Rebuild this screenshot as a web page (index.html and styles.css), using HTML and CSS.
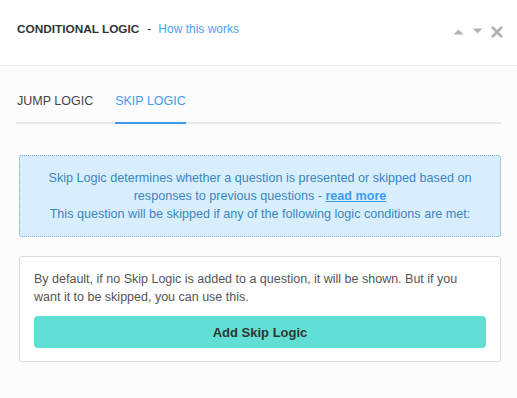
FILE: index.html
```html
<!DOCTYPE html>
<html>
<head>
<meta charset="utf-8">
<link rel="stylesheet" href="styles.css">
</head>
<body>
<div class="panel">
  <header class="header">
    <div class="title">
      <span class="title-main">CONDITIONAL LOGIC</span>
      <span class="dash">-</span>
      <a class="how" href="#">How this works</a>
    </div>
    <div class="controls">
      <svg width="11" height="7" viewBox="0 0 11 7"><path d="M0.5 6.5 L5.5 1.5 L10.5 6.5 Z" fill="#b3b3b3"/></svg>
      <svg width="11" height="7" viewBox="0 0 11 7"><path d="M0.5 0.5 L5.5 5.5 L10.5 0.5 Z" fill="#b3b3b3"/></svg>
      <svg width="12" height="12" viewBox="0 0 12 12"><path d="M1.8 1.8 L10.2 10.2 M10.2 1.8 L1.8 10.2" stroke="#b3b3b3" stroke-width="2.8" stroke-linecap="round"/></svg>
    </div>
  </header>
  <div class="content">
    <nav class="tabs">
      <a class="tab" href="#">JUMP LOGIC</a>
      <a class="tab active" href="#">SKIP LOGIC</a>
    </nav>
    <div class="info">
      Skip Logic determines whether a question is presented or skipped based on responses to previous questions - <a class="more" href="#">read more</a><br>
      This question will be skipped if any of the following logic conditions are met:
    </div>
    <div class="card">
      <p class="card-text">By default, if no Skip Logic is added to a question, it will be shown. But if you want it to be skipped, you can use this.</p>
      <button class="add-btn">Add Skip Logic</button>
    </div>
  </div>
</div>
</body>
</html>
```
FILE: styles.css
```css
* { box-sizing: border-box; }
html, body { margin: 0; padding: 0; }
body {
  font-family: "Liberation Sans", Arial, sans-serif;
  background: #fcfcfc;
  width: 517px;
  height: 398px;
  overflow: hidden;
}
.panel { display: flex; flex-direction: column; }
.header {
  height: 66px;
  background: #fff;
  border-bottom: 1px solid #ececec;
  display: flex;
  align-items: center;
  justify-content: space-between;
  padding: 0 14px 0 17px;
}
.title { font-size: 12px; display: flex; align-items: center; margin-top: -7px; }
.title-main { color: #333; font-weight: bold; font-size: 11.8px; }
.dash { color: #333; margin: 0 7px 0 8px; }
.how { color: #4aa3f0; text-decoration: none; }
.controls { display: flex; align-items: center; gap: 8px; margin-top: -2px; }
.content { padding: 0 16px 0 16px; }
.tabs {
  display: flex;
  gap: 22px;
  margin-top: 26px;
  border-bottom: 2px solid #e4e8ee;
  padding-left: 1px;
}
.tab {
  font-size: 12.5px;
  color: #444;
  text-decoration: none;
  padding: 2px 0 14px;
  margin-bottom: -2px;
  border-bottom: 2px solid transparent;
}
.tab.active { color: #3d9cf0; border-bottom-color: #3d9cf0; }
.info {
  margin: 31px 0 0 3px;
  width: 482px;
  background: #d9eefc;
  border: 1px dotted #6fa6d2;
  border-radius: 3px;
  color: #3a86c0;
  font-size: 12.6px;
  line-height: 18px;
  text-align: center;
  padding: 13px 20px 13px;
}
.more { color: #3d9cf0; font-weight: bold; text-decoration: underline; }
.card {
  margin: 19px 0 0 3px;
  width: 482px;
  background: #fff;
  border: 1px solid #dcdcdc;
  border-radius: 3px;
  padding: 13px 14px 13px;
}
.card-text {
  margin: 0;
  font-size: 12.5px;
  line-height: 18px;
  color: #555;
}
.add-btn {
  margin-top: 10px;
  width: 100%;
  height: 32px;
  border: none;
  border-radius: 4px;
  background: #62dfd5;
  color: #333;
  font-family: "Liberation Sans", Arial, sans-serif;
  font-weight: bold;
  font-size: 13px;
}
```
